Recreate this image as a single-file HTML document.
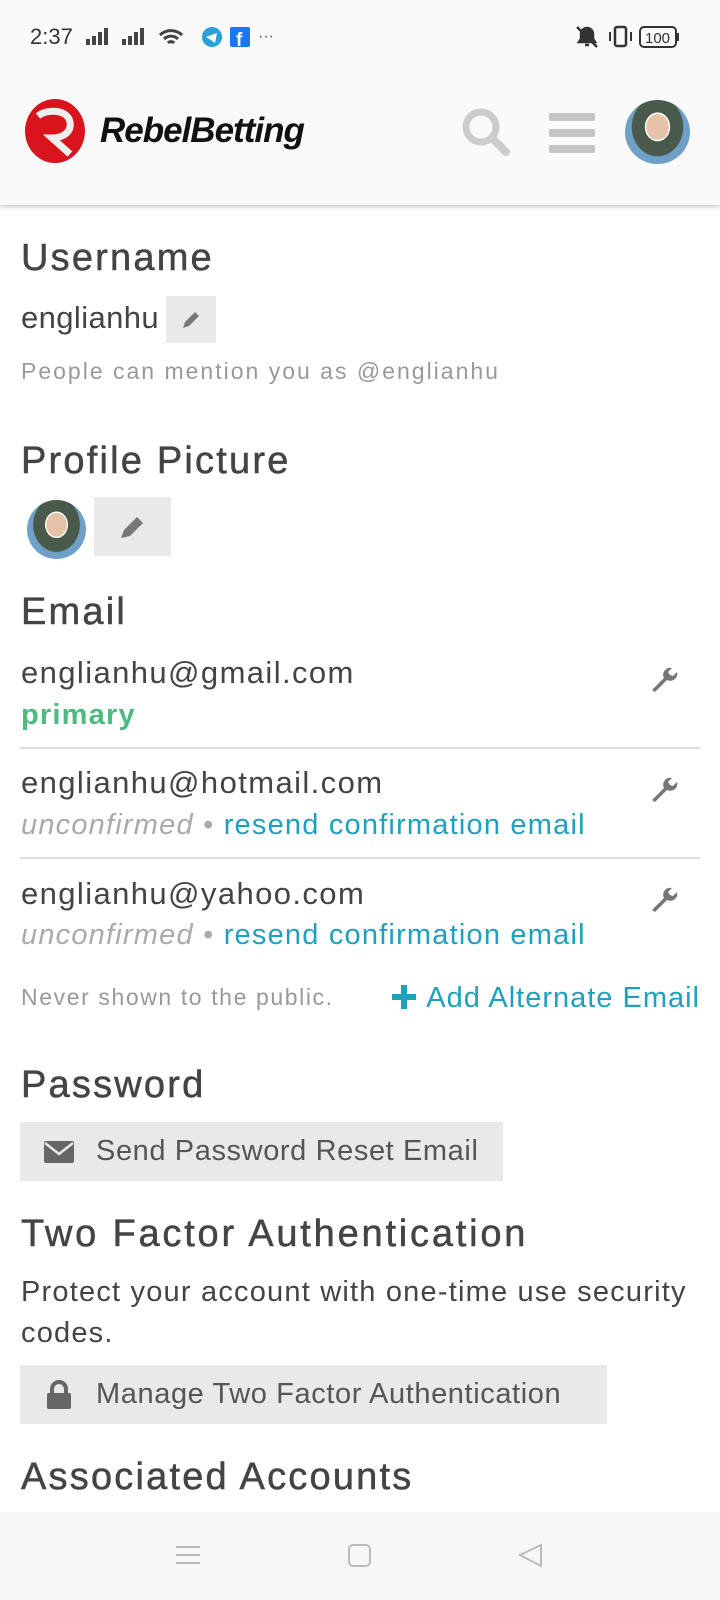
<!DOCTYPE html>
<html><head><meta charset="utf-8"><style>
*{margin:0;padding:0;box-sizing:border-box}
body{width:720px;height:1600px;background:#fff;font-family:"Liberation Sans",sans-serif;color:#444;position:relative;overflow:hidden}
.a{position:absolute;white-space:nowrap}
h2{position:absolute;left:21px;font-size:38px;font-weight:normal;color:#444;white-space:nowrap;line-height:1;letter-spacing:2.2px;-webkit-text-stroke:0.5px #444}
.em{font-size:31px;color:#444;line-height:1;letter-spacing:1.4px}
.sub{font-size:29px;line-height:1;letter-spacing:1.2px}
.line{position:absolute;left:20px;width:680px;height:2px;background:#ddd}
.btn{position:absolute;left:20px;height:59px;background:#e9e9e9;font-size:29px;color:#555;line-height:59px;padding-left:76px;letter-spacing:0.6px;white-space:nowrap}
.av{background:radial-gradient(ellipse at 50% 42%,#e6c3a8 0 24%,#fff 25% 27%,#4a5a4a 28% 55%,#6fa0c8 57%)}
</style></head><body>
<div style="position:absolute;left:0;top:0;width:720px;height:205px;background:#fafafa;box-shadow:0 2px 4px rgba(0,0,0,.2)"></div>
<div class="a" style="left:30px;top:24px;font-size:22px;color:#333">2:37</div>
<svg class="a" style="left:86px;top:27px" width="200" height="22">
<g fill="#444"><rect x="0" y="12" width="4" height="6"/><rect x="6" y="9" width="4" height="9"/><rect x="12" y="5" width="4" height="13"/><rect x="18" y="1" width="4" height="17"/>
<rect x="36" y="12" width="4" height="6"/><rect x="42" y="9" width="4" height="9"/><rect x="48" y="5" width="4" height="13"/><rect x="54" y="1" width="4" height="17"/></g>
<path d="M74 8a16 16 0 0 1 22 0M78 12a10 10 0 0 1 14 0M82 16a4 4 0 0 1 6 0" stroke="#444" stroke-width="3" fill="none"/>
<circle cx="126" cy="10" r="10" fill="#2aa0d8"/><path d="M120 10l11-4-2 10-4-3z" fill="#fff"/>
<rect x="144" y="0" width="20" height="20" fill="#1877f2" rx="2"/><text x="150" y="19" font-size="19" font-weight="bold" fill="#fff" font-family="Liberation Sans">f</text>
<text x="172" y="14" font-size="16" fill="#555">···</text></svg>
<svg class="a" style="left:575px;top:24px" width="120" height="26">
<path d="M4 18h16l-2-3v-5a6 6 0 0 0-12 0v5zM10 21h4" stroke="#333" stroke-width="2.5" fill="#333"/><line x1="2" y1="3" x2="22" y2="23" stroke="#333" stroke-width="2.5"/>
<rect x="40" y="3" width="11" height="19" rx="2" stroke="#333" stroke-width="2.5" fill="none"/><path d="M35 8v9M56 8v9" stroke="#333" stroke-width="2"/>
<rect x="65" y="3" width="36" height="20" rx="4" stroke="#333" stroke-width="2" fill="none"/><text x="70" y="19" font-size="15" fill="#333">100</text><rect x="102" y="9" width="2" height="8" fill="#333"/></svg>
<svg class="a" style="left:24px;top:98px" width="64" height="66"><ellipse cx="31" cy="33" rx="30" ry="32" fill="#d8141c"/><path d="M14 18c10-8 30-6 32 6s-10 16-18 16l18 16" stroke="#eee" stroke-width="7" fill="none"/></svg>
<div class="a" style="left:100px;top:111px;font-size:35px;font-weight:bold;font-style:italic;color:#111;letter-spacing:-1px">RebelBetting</div>
<svg class="a" style="left:460px;top:106px" width="56" height="56"><circle cx="21" cy="21" r="15" stroke="#ccc" stroke-width="7" fill="none"/><path d="M32 32l14 14" stroke="#ccc" stroke-width="8" stroke-linecap="round"/></svg>
<svg class="a" style="left:549px;top:113px" width="46" height="40"><g fill="#c6c6c6"><rect y="0" width="46" height="8" rx="2"/><rect y="16" width="46" height="8" rx="2"/><rect y="32" width="46" height="8" rx="2"/></g></svg>
<div class="a av" style="left:625px;top:100px;width:65px;height:64px;border-radius:50%"></div>
<h2 style="top:239px">Username</h2>
<div class="a em" style="left:21px;top:302px;letter-spacing:0.4px">englianhu</div>
<div class="a" style="left:166px;top:296px;width:50px;height:47px;background:#e9e9e9"></div>
<svg class="a" style="left:180px;top:309px" width="22" height="22"><path d="M3 19l2-6L15 3l4 4L9 17z" fill="#777"/></svg>
<div class="a" style="left:21px;top:358px;font-size:23px;color:#999;letter-spacing:2px">People can mention you as @englianhu</div>
<h2 style="top:442px">Profile Picture</h2>
<div class="a av" style="left:27px;top:500px;width:59px;height:59px;border-radius:50%"></div>
<div class="a" style="left:94px;top:497px;width:77px;height:59px;background:#e9e9e9"></div>
<svg class="a" style="left:118px;top:513px" width="30" height="28"><path d="M3 25l3-8L19 4l6 6L12 23z" fill="#777"/></svg>
<h2 style="top:593px">Email</h2>
<div class="a em" style="left:21px;top:657px">englianhu@gmail.com</div>
<div class="a sub" style="left:21px;top:701px;color:#4cbb7f;font-weight:bold">primary</div>
<div class="line" style="top:747px"></div>
<div class="a em" style="left:21px;top:767px">englianhu@hotmail.com</div>
<div class="a sub" style="left:21px;top:811px"><i style="color:#aaa">unconfirmed</i> <span style="color:#aaa">•</span> <span style="color:#1fa0be">resend confirmation email</span></div>
<div class="line" style="top:857px"></div>
<div class="a em" style="left:21px;top:878px">englianhu@yahoo.com</div>
<div class="a sub" style="left:21px;top:921px"><i style="color:#aaa">unconfirmed</i> <span style="color:#aaa">•</span> <span style="color:#1fa0be">resend confirmation email</span></div>
<svg class="a" style="left:646px;top:662px" width="32" height="32"><path d="M6 28l12-12a7 7 0 0 1 8-10l-4 4 2 3 3 1 4-4a7 7 0 0 1-10 8L9 30z" fill="#777"/></svg>
<svg class="a" style="left:646px;top:772px" width="32" height="32"><path d="M6 28l12-12a7 7 0 0 1 8-10l-4 4 2 3 3 1 4-4a7 7 0 0 1-10 8L9 30z" fill="#777"/></svg>
<svg class="a" style="left:646px;top:882px" width="32" height="32"><path d="M6 28l12-12a7 7 0 0 1 8-10l-4 4 2 3 3 1 4-4a7 7 0 0 1-10 8L9 30z" fill="#777"/></svg>
<div class="a" style="left:21px;top:984px;font-size:23px;color:#999;letter-spacing:1.6px">Never shown to the public.</div>
<div class="a" style="right:20px;top:982px;font-size:29px;color:#1fa0be;letter-spacing:1px"><svg width="28" height="28" style="vertical-align:-4px;margin-right:8px"><path d="M14 2v24M2 14h24" stroke="#1fa0be" stroke-width="6"/></svg>Add Alternate Email</div>
<h2 style="top:1066px">Password</h2>
<div class="btn" style="top:1122px;width:483px">Send Password Reset Email</div>
<svg class="a" style="left:44px;top:1141px" width="30" height="22"><rect width="30" height="22" rx="2" fill="#666"/><path d="M1 2l14 11 14-11" stroke="#e9e9e9" stroke-width="2.5" fill="none"/></svg>
<h2 style="top:1215px;letter-spacing:2.8px">Two Factor Authentication</h2>
<div class="a" style="left:21px;top:1272px;font-size:29px;color:#444;line-height:41px;white-space:normal;width:680px;letter-spacing:1.2px">Protect your account with one-time use security codes.</div>
<div class="btn" style="top:1365px;width:587px">Manage Two Factor Authentication</div>
<svg class="a" style="left:46px;top:1380px" width="26" height="30"><path d="M6 13v-4a7 7 0 0 1 14 0v4" stroke="#666" stroke-width="4" fill="none"/><rect x="1" y="13" width="24" height="16" rx="2" fill="#666"/></svg>
<h2 style="top:1458px">Associated Accounts</h2>
<div class="a" style="left:0;top:1512px;width:720px;height:88px;background:#f7f7f7"></div>
<svg class="a" style="left:0;top:1540px" width="720" height="32"><path d="M176 7h24M176 15h24M176 23h24" stroke="#bbb" stroke-width="2"/><rect x="349" y="5" width="21" height="21" rx="4" stroke="#bbb" stroke-width="2" fill="none"/><path d="M541 5L520 15l21 11z" stroke="#bbb" stroke-width="2" fill="none"/></svg>
</body></html>
